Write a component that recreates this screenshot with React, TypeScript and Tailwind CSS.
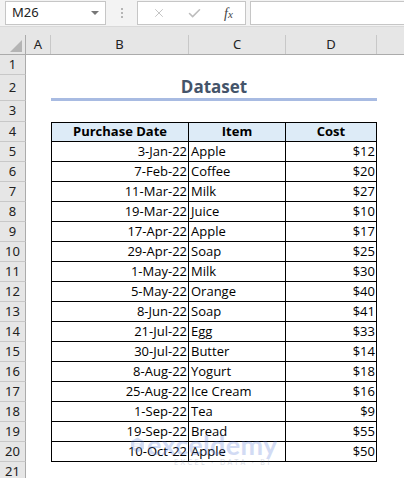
import { X, Check } from 'lucide-react';

const rows = [
  ['3-Jan-22', 'Apple', '$12'],
  ['7-Feb-22', 'Coffee', '$20'],
  ['11-Mar-22', 'Milk', '$27'],
  ['19-Mar-22', 'Juice', '$10'],
  ['17-Apr-22', 'Apple', '$17'],
  ['29-Apr-22', 'Soap', '$25'],
  ['1-May-22', 'Milk', '$30'],
  ['5-May-22', 'Orange', '$40'],
  ['8-Jun-22', 'Soap', '$41'],
  ['21-Jul-22', 'Egg', '$33'],
  ['30-Jul-22', 'Butter', '$14'],
  ['8-Aug-22', 'Yogurt', '$18'],
  ['25-Aug-22', 'Ice Cream', '$16'],
  ['1-Sep-22', 'Tea', '$9'],
  ['19-Sep-22', 'Bread', '$55'],
  ['10-Oct-22', 'Apple', '$50'],
];

function RowHead({ n, h = 'h-[20px]' }: { n: number; h?: string }) {
  return (
    <div
      className={`${h} w-[26px] shrink-0 flex items-center justify-center bg-[#e6e6e6] border-r border-b border-r-[#ababab] border-b-[#c8c8c8] text-[13px] text-[#222] font-['Noto_Sans',sans-serif]`}
    >
      {n}
    </div>
  );
}

export default function App() {
  return (
    <div className="w-[404px] h-[478px] overflow-hidden bg-white relative font-['Open_Sans',sans-serif] text-black">
      {/* formula bar */}
      <div className="h-[27px] bg-[#f3f3f3] border-b border-[#d9d9d9] flex items-start pt-[1px]">
        <div className="ml-[5px] w-[101px] h-[24px] bg-white border border-[#c6c6c6] flex items-center pl-[6px] pr-[6px] justify-between">
          <span className="text-[13px] text-[#222] font-['Noto_Sans',sans-serif]">M26</span>
          <span className="w-0 h-0 border-l-[4px] border-r-[4px] border-t-[4px] border-l-transparent border-r-transparent border-t-[#777]" />
        </div>
        <div className="w-[31px] h-[24px] flex flex-col items-center justify-center gap-[2px]">
          <span className="w-[2px] h-[2px] bg-[#b5b5b5]" />
          <span className="w-[2px] h-[2px] bg-[#b5b5b5]" />
          <span className="w-[2px] h-[2px] bg-[#b5b5b5]" />
        </div>
        <div className="w-[109px] h-[24px] bg-white border border-[#c6c6c6] flex items-center">
          <X className="ml-[14px] w-[14px] h-[14px] text-[#bdbdbd]" strokeWidth={1.5} />
          <Check className="ml-[21px] w-[15px] h-[15px] text-[#bdbdbd]" strokeWidth={2.5} />
          <span className="ml-[22px] italic text-[14px] text-[#444] font-['Liberation_Serif',serif]">
            f<span className="text-[11px]">x</span>
          </span>
        </div>
        <div className="ml-[4px] flex-1 h-[24px] bg-white border border-[#c6c6c6] border-r-0" />
      </div>

      {/* column headers */}
      <div className="h-[28px] bg-[#e6e6e6] border-b border-[#ababab] flex items-end text-[13px] text-[#222] font-['Noto_Sans',sans-serif]">
        <div className="w-[26px] h-[19px] border-r border-[#ababab] flex items-end justify-end pr-[3px] pb-[2px]">
          <svg width="12" height="12" viewBox="0 0 12 12">
            <path d="M12 0 L12 12 L0 12 Z" fill="#b4b4b4" />
          </svg>
        </div>
        <div className="w-[25px] h-[19px] border-r border-[#c8c8c8] flex items-center justify-center">A</div>
        <div className="w-[138px] h-[19px] border-r border-[#c8c8c8] flex items-center justify-center">B</div>
        <div className="w-[97px] h-[19px] border-r border-[#c8c8c8] flex items-center justify-center">C</div>
        <div className="w-[91px] h-[19px] border-r border-[#c8c8c8] flex items-center justify-center">D</div>
        <div className="flex-1 h-[19px]" />
      </div>

      {/* row 1 */}
      <div className="flex">
        <RowHead n={1} />
      </div>
      {/* row 2: title */}
      <div className="flex">
        <RowHead n={2} h="h-[26px]" />
        <div className="w-[25px]" />
        <div className="w-[326px] h-[26px] border-b-[3px] border-[#a8bbe2] flex items-center justify-center text-[17px] font-bold text-[#44546a]">
          Dataset
        </div>
      </div>
      {/* row 3 */}
      <div className="flex">
        <RowHead n={3} h="h-[21px]" />
      </div>
      {/* row 4: header */}
      <div className="flex">
        <RowHead n={4} />
        <div className="w-[25px]" />
        <div className="w-[138px] h-[20px] bg-[#ddebf7] border border-black flex items-center justify-center text-[13px] font-bold">
          Purchase Date
        </div>
        <div className="w-[97px] h-[20px] bg-[#ddebf7] border-y border-r border-black flex items-center justify-center text-[13px] font-bold">
          Item
        </div>
        <div className="w-[91px] h-[20px] bg-[#ddebf7] border-y border-r border-black flex items-center justify-center text-[13px] font-bold">
          Cost
        </div>
      </div>
      {rows.map(([date, item, cost], i) => (
        <div key={i} className="flex">
          <RowHead n={i + 5} />
          <div className="w-[25px]" />
          <div className="w-[138px] h-[20px] border-x border-b border-black flex items-center justify-end pr-[1px] text-[13px]">
            {date}
          </div>
          <div className="w-[97px] h-[20px] border-r border-b border-black flex items-center pl-[2px] text-[13px]">
            {item}
          </div>
          <div className="w-[91px] h-[20px] border-r border-b border-black flex items-center justify-end pr-[1px] text-[13px]">
            {cost}
          </div>
        </div>
      ))}
      <div className="flex">
        <RowHead n={21} />
      </div>

      {/* watermark */}
      <div className="absolute left-[130px] top-[433px] flex flex-col items-start opacity-25 pointer-events-none">
        <div className="flex items-center gap-[2px]">
          <svg width="15" height="18" viewBox="0 0 14 16">
            <path d="M7 1 L13 4.5 L13 11.5 L7 15 L1 11.5 L1 4.5 Z" fill="#4f74d4" />
            <path d="M4 6 L10 6 M4 8 L9 8 M4 10 L10 10" stroke="#fff" strokeWidth="1.4" />
          </svg>
          <span className="text-[27px] leading-[24px] font-bold text-[#4f74d4] font-['Lato',sans-serif] tracking-[0.3px]">exceldemy</span>
        </div>
        <span className="ml-[44px] mt-[1px] text-[7px] leading-[8px] tracking-[2.5px] text-[#6a7a98] font-['Lato',sans-serif]">EXCEL · DATA · BI</span>
      </div>
    </div>
  );
}
